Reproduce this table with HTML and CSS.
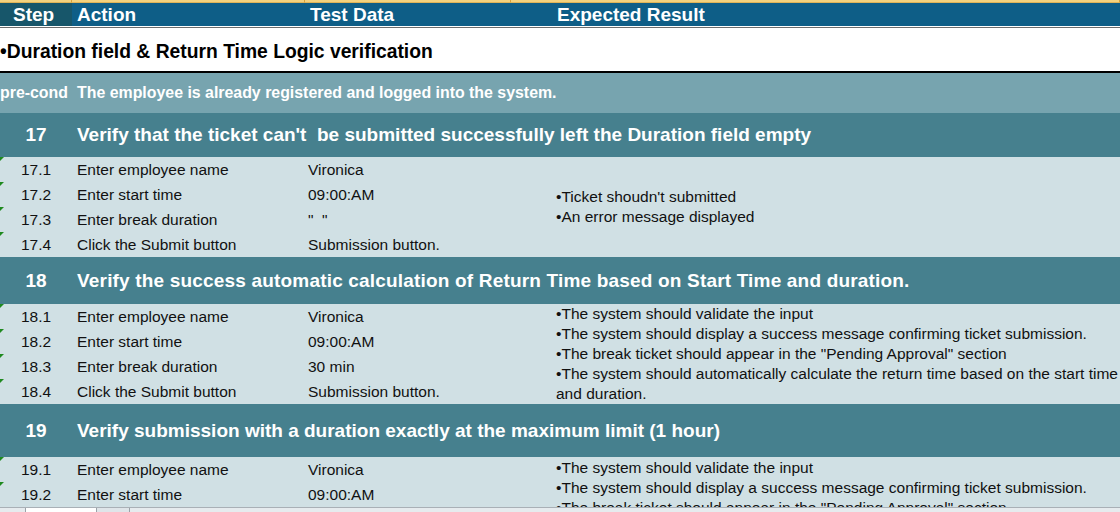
FILE: index.html
```html
<!DOCTYPE html>
<html>
<head>
<meta charset="utf-8">
<link rel="stylesheet" href="styles.css">
</head>
<body>
<div class="sheet">
  <div class="strip">
    <span class="strip-cell c1"></span>
    <span class="strip-cell c2"></span>
    <span class="strip-cell c3"></span>
    <span class="strip-cell c4"></span>
  </div>
  <div class="hdr">
    <div class="hdr-step">Step</div>
    <div class="hdr-cell">Action</div>
    <div class="hdr-cell">Test Data</div>
    <div class="hdr-cell hdr-exp">Expected Result</div>
  </div>
  <div class="title">•Duration field &amp; Return Time Logic verification</div>
  <div class="precond">
    <div class="pc-label">pre-cond</div>
    <div class="pc-text">The employee is already registered and logged into the system.</div>
  </div>

  <div class="case-head h17">
    <div class="case-num">17</div>
    <div class="case-title">Verify that the ticket can't&nbsp; be submitted successfully left the Duration field empty</div>
  </div>
  <div class="case-body">
    <div class="step">17.1</div><div class="act">Enter employee name</div><div class="data">Vironica</div>
    <div class="exp">•Ticket shoudn't submitted<br>•An error message displayed</div>
    <div class="step">17.2</div><div class="act">Enter start time</div><div class="data">09:00:AM</div>
    <div class="step">17.3</div><div class="act">Enter break duration</div><div class="data">"&nbsp; "</div>
    <div class="step">17.4</div><div class="act">Click the Submit button</div><div class="data">Submission button.</div>
  </div>

  <div class="case-head h18">
    <div class="case-num">18</div>
    <div class="case-title wide">Verify the success automatic calculation of Return Time based on Start Time and duration.</div>
  </div>
  <div class="case-body">
    <div class="step">18.1</div><div class="act">Enter employee name</div><div class="data">Vironica</div>
    <div class="exp">•The system should validate the input<br>•The system should display a success message confirming ticket submission.<br>•The break ticket should appear in the "Pending Approval" section<br>•The system should automatically calculate the return time based on the start time and duration.</div>
    <div class="step">18.2</div><div class="act">Enter start time</div><div class="data">09:00:AM</div>
    <div class="step">18.3</div><div class="act">Enter break duration</div><div class="data">30 min</div>
    <div class="step">18.4</div><div class="act">Click the Submit button</div><div class="data">Submission button.</div>
  </div>

  <div class="case-head h19">
    <div class="case-num">19</div>
    <div class="case-title">Verify submission with a duration exactly at the maximum limit (1 hour)</div>
  </div>
  <div class="case-body body19">
    <div class="step">19.1</div><div class="act">Enter employee name</div><div class="data">Vironica</div>
    <div class="exp exp-top">•The system should validate the input<br>•The system should display a success message confirming ticket submission.<br>•The break ticket should appear in the "Pending Approval" section</div>
    <div class="step">19.2</div><div class="act">Enter start time</div><div class="data">09:00:AM</div>
  </div>
</div>
<div class="tabs">
  <span class="tab-gap"></span>
  <span class="tab-active"></span>
  <span class="tab-add"></span>
</div>
</body>
</html>
```

FILE: styles.css
```css
html, body {
  margin: 0;
  padding: 0;
  background: #ffffff;
  overflow: hidden;
  height: 512px;
}

.sheet {
  width: 1120px;
  font-family: "Liberation Sans", Arial, sans-serif;
}

.strip {
  display: grid;
  grid-template-columns: 72px 233px 206px 1fr;
  height: 3px;
  background: #f4d27e;
}
.strip-cell {
  border-right: 1px solid #d4a13c;
  border-bottom: 1px solid #e0b458;
}

.hdr {
  display: grid;
  grid-template-columns: 72px 233px 248px 1fr;
  height: 23px;
  background: #0e5e87;
  color: #ffffff;
  font-weight: bold;
  font-size: 19px;
  line-height: 23px;
  border-bottom: 1px solid #ffffff;
}
.hdr-step {
  background: #17566a;
  padding-left: 13px;
}
.hdr-cell {
  padding-left: 5px;
}
.hdr-exp {
  padding-left: 4px;
}

.title {
  border-top: 1px solid #6c6c6c;
  height: 43px;
  line-height: 47px;
  font-size: 19.3px;
  font-weight: bold;
  color: #000000;
  border-bottom: 2px solid #000000;
}

.precond {
  display: grid;
  grid-template-columns: 77px 1fr;
  align-items: center;
  height: 40px;
  background: #77a4af;
  color: #ffffff;
  font-weight: bold;
  font-size: 15.9px;
}
.pc-label {
  white-space: nowrap;
}

.case-head {
  display: grid;
  grid-template-columns: 72px 1fr;
  align-items: center;
  background: #46808e;
  color: #ffffff;
  font-weight: bold;
  font-size: 19px;
}
.h17 { height: 44px; }
.h18 { height: 47px; }
.h19 { height: 53px; }
.case-num {
  text-align: center;
}
.case-title {
  padding-left: 5px;
  white-space: nowrap;
}
.case-title.wide {
  letter-spacing: 0.18px;
}

.case-body {
  display: grid;
  grid-template-columns: 72px 233px 248px 1fr;
  grid-auto-rows: 25px;
  background: #d0e0e4;
  color: #111111;
  font-size: 15.5px;
}
.body19 {
  height: 60px;
}
.step {
  position: relative;
  text-align: center;
  line-height: 25px;
}
.step::before {
  content: "";
  position: absolute;
  left: 0;
  top: 0;
  width: 0;
  height: 0;
  border-top: 4px solid #1f8a1f;
  border-right: 4px solid transparent;
}
.act {
  line-height: 25px;
  padding-left: 5px;
  white-space: nowrap;
}
.data {
  line-height: 25px;
  padding-left: 3px;
  white-space: nowrap;
}
.exp {
  grid-column: 4;
  grid-row: 1 / span 4;
  align-self: center;
  padding-left: 3px;
  padding-right: 0;
  font-size: 15.5px;
  line-height: 20px;
  color: #111111;
}
.exp-top {
  grid-row: 1 / span 2;
  align-self: start;
  padding-top: 1px;
}

.tabs {
  position: fixed;
  left: 0;
  bottom: 0;
  width: 1120px;
  height: 4px;
  background: #e6ebee;
  border-top: 1px solid #a9b0b6;
  display: flex;
}
.tab-gap { width: 25px; }
.tab-active {
  width: 70px;
  background: #ffffff;
  border-left: 1px solid #9aa2a8;
  border-right: 1px solid #9aa2a8;
}
.tab-add {
  width: 32px;
  background: #dfe5e9;
  border-right: 1px solid #9aa2a8;
}
```
